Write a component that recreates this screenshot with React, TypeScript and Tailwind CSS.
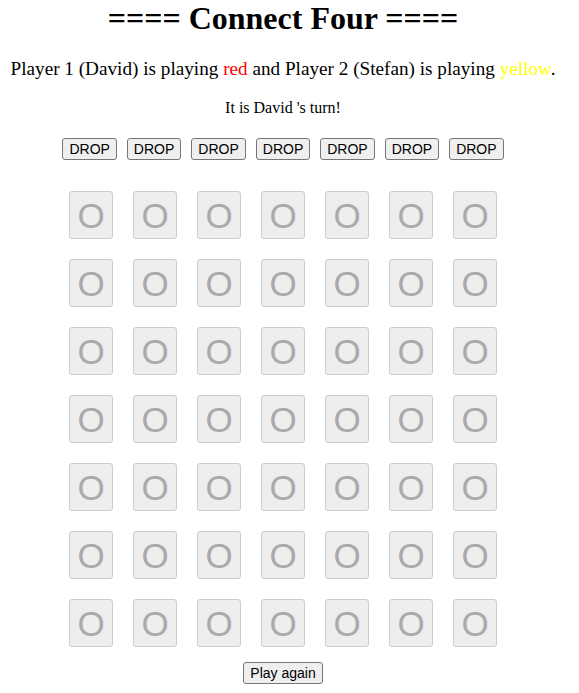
const COLS = 7
const ROWS = 7

const btn =
  "border border-[#767676] bg-[#efefef] rounded-[3px] px-[6px] py-[2px] text-[14px] leading-[16px] text-black [font-family:'Liberation_Sans',Arial,sans-serif]"

export default function App() {
  return (
    <main className="w-[566px] bg-white text-center text-black [font-family:'Liberation_Serif','Times_New_Roman',serif]">
      <h1 className="m-0 text-[32px] font-bold leading-[37px]">==== Connect Four ====</h1>

      <p className="mt-[21px] text-[19.2px] leading-[22px]">
        Player 1 (David) is playing <span className="text-[#ff0000]">red</span> and Player 2 (Stefan) is playing{" "}
        <span className="text-[#ffff00]">yellow</span>.
      </p>

      <p className="mt-[18px] text-[16px] leading-[19px]">It is David 's turn!</p>

      <div className="mt-[21px] flex justify-center gap-[10px]">
        {Array.from({ length: COLS }).map((_, i) => (
          <button key={i} className={btn}>
            DROP
          </button>
        ))}
      </div>

      <div className="mt-[31px] flex flex-col items-center gap-[20px]">
        {Array.from({ length: ROWS }).map((_, r) => (
          <div key={r} className="flex gap-[20px]">
            {Array.from({ length: COLS }).map((_, c) => (
              <div
                key={c}
                className="flex h-[48px] w-[44px] items-center justify-center rounded-[3px] border border-[#cccccc] bg-[#eeeeee] text-[35px] leading-none text-[#aaaaaa] [font-family:'Liberation_Sans',Arial,sans-serif]"
              >
                O
              </div>
            ))}
          </div>
        ))}
      </div>

      <div className="mt-[15px] flex justify-center">
        <button className={btn}>Play again</button>
      </div>
    </main>
  )
}
